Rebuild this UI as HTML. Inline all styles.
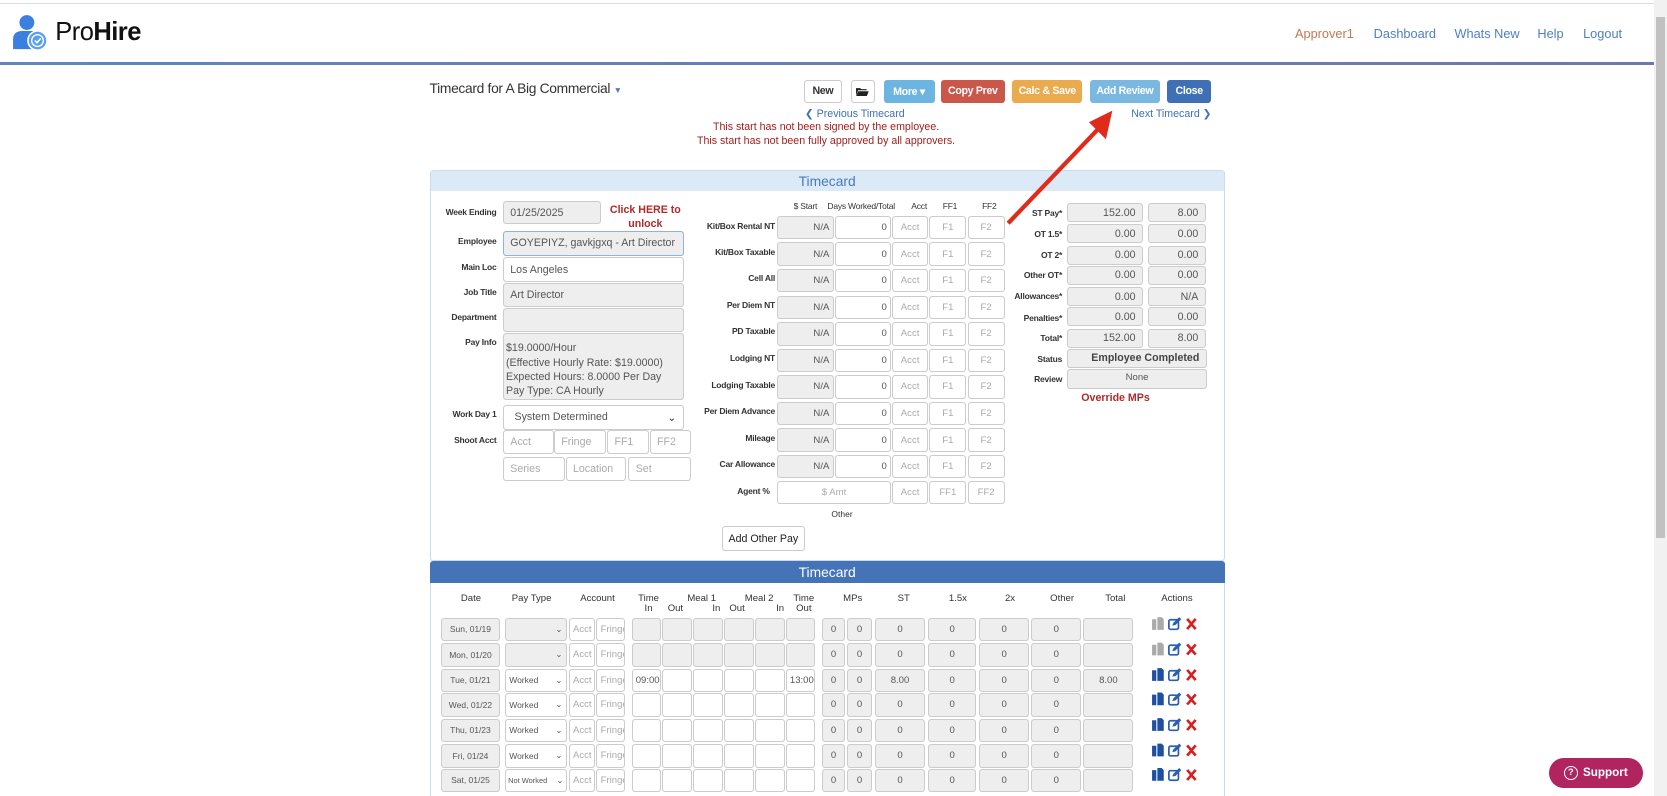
<!DOCTYPE html>
<html><head><meta charset="utf-8"><style>
html,body{margin:0;padding:0;background:#fff;overflow:hidden;width:1667px;height:796px}
#z{zoom:1.0632;position:relative;width:1568px;height:749px;font-family:"Liberation Sans",sans-serif;color:#333}
.a{position:absolute}
.f{position:absolute;box-sizing:border-box;border:1px solid #ccc;border-radius:3px;background:#eee;font-size:10px;color:#555;padding:0 6px;display:flex;align-items:center;white-space:nowrap}
.w{background:#fff}
.ph{color:#aaa}
.rt{justify-content:flex-end}
.ct{justify-content:center}
.l{position:absolute;font-size:8px;color:#333;text-align:right;font-weight:bold;letter-spacing:-.2px}
.btn{position:absolute;top:75px;height:22px;box-sizing:border-box;border-radius:3px;font-size:10px;font-weight:bold;color:#fff;display:flex;align-items:center;justify-content:center;letter-spacing:-.3px}
.r{position:absolute;left:0;width:1568px;height:22px}
.r .f{top:0;height:22px;font-size:9px;padding:0 3px}
.h{position:absolute;font-size:9px;color:#333;text-align:center;line-height:9px;white-space:nowrap}
</style></head><body><div id="z">
<div class="a" style="left:0;top:3px;width:1556px;height:1px;background:#ddd"></div>
<svg class="a" style="left:11px;top:13px" width="34" height="35" viewBox="0 0 34 35">
<circle cx="14" cy="8" r="7" fill="#3b7fe0"/>
<path d="M1 33 V24 Q1 16 10 16 H19 Q26 16 27 22 L27 33 Z" fill="#3b7fe0"/>
<circle cx="24" cy="25" r="9" fill="#5aa0f0" stroke="#fff" stroke-width="1.5"/>
<circle cx="24" cy="25" r="5.5" fill="none" stroke="#fff" stroke-width="1.3"/>
<path d="M21.5 25 L23.5 27 L27 23" fill="none" stroke="#fff" stroke-width="1.5"/>
</svg>
<div class="a" style="left:52px;top:17px;font-size:24px;color:#111;letter-spacing:-.5px">Pro<b>Hire</b></div>
<div class="a" style="top:24px;font-size:12px;left:1218px;color:#c07850">Approver1</div>
<div class="a" style="top:24px;font-size:12px;left:1292px;color:#4f7fc0">Dashboard</div>
<div class="a" style="top:24px;font-size:12px;left:1368px;color:#4f7fc0">Whats New</div>
<div class="a" style="top:24px;font-size:12px;left:1446px;color:#4f7fc0">Help</div>
<div class="a" style="top:24px;font-size:12px;left:1489px;color:#4f7fc0">Logout</div>
<div class="a" style="left:0;top:58px;width:1556px;height:3px;background:linear-gradient(90deg,#6384bd,#7077ad)"></div>
<div class="a" style="left:1556px;top:0;width:12px;height:749px;background:#f1f1f1"></div>
<div class="a" style="left:1558px;top:16px;width:8px;height:490px;background:#c1c1c1"></div>
<div class="a" style="left:404px;top:75px;font-size:13px;color:#333;letter-spacing:-.3px">Timecard for A Big Commercial <span style="font-size:8px;color:#4f7fc0">▼</span></div>
<div class="btn" style="left:756px;width:36px;background:#fff;border:1px solid #ccc;color:#333">New</div>
<div class="btn" style="left:800px;width:23px;background:#fff;border:1px solid #ccc;color:#222">
<svg width="12" height="9" viewBox="0 0 12 9"><path d="M0 1 H4 L5 2 H10 V3 H2 L0 8Z M2 4 H12 L10 9 H0Z" fill="#222"/></svg></div>
<div class="btn" style="left:831px;width:48px;background:#6bb5e0">More ▾</div>
<div class="btn" style="left:885px;width:60px;background:#c9584a">Copy Prev</div>
<div class="btn" style="left:952px;width:66px;background:#eaaa4e">Calc &amp; Save</div>
<div class="btn" style="left:1025px;width:66px;background:#7ab8e2">Add Review</div>
<div class="btn" style="left:1098px;width:41px;background:#3f6fb5">Close</div>
<div class="a" style="left:757px;top:101px;font-size:10px;color:#3f6fb5">❮ Previous Timecard</div>
<div class="a" style="left:1064px;top:101px;font-size:10px;color:#3f6fb5">Next Timecard ❯</div>
<div class="a" style="left:600px;width:354px;top:114px;font-size:10px;color:#a32020;text-align:center;line-height:13px">This start has not been signed by the employee.<br>This start has not been fully approved by all approvers.</div>
<div class="a" style="left:404px;top:160px;width:746px;height:366px;border:1px solid #c9dcee;border-radius:3px"></div>
<div class="a" style="left:405px;top:161px;width:746px;height:19px;background:#dce9f6;color:#4a7ab8;font-size:13px;text-align:center;line-height:20px">Timecard</div>
<div class="l" style="left:400px;width:67px;top:195px">Week Ending</div>
<div class="f" style="left:473px;top:189px;width:92px;height:22px">01/25/2025</div>
<div class="a" style="left:572px;width:70px;top:192px;font-size:10px;font-weight:bold;color:#b02a2a;text-align:center;line-height:13px">Click HERE to unlock</div>
<div class="l" style="left:400px;width:67px;top:222px">Employee</div>
<div class="f" style="left:473px;top:217px;width:170px;height:24px;border-color:#8fb3da">GOYEPIYZ, gavkjgxq - Art Director</div>
<div class="l" style="left:400px;width:67px;top:246px">Main Loc</div>
<div class="f w" style="left:473px;top:242px;width:170px;height:23px">Los Angeles</div>
<div class="l" style="left:400px;width:67px;top:270px">Job Title</div>
<div class="f" style="left:473px;top:266px;width:170px;height:23px">Art Director</div>
<div class="l" style="left:400px;width:67px;top:293px">Department</div>
<div class="f" style="left:473px;top:290px;width:170px;height:22px"></div>
<div class="l" style="left:400px;width:67px;top:317px">Pay Info</div>
<div class="f" style="left:473px;top:313px;width:170px;height:63px;align-items:flex-start;padding:7px 1px 0 2px;line-height:13.5px;font-size:10px;white-space:normal">$19.0000/Hour<br>(Effective Hourly Rate: $19.0000)<br>Expected Hours: 8.0000 Per Day<br>Pay Type: CA Hourly</div>
<div class="l" style="left:400px;width:67px;top:385px">Work Day 1</div>
<div class="f w" style="left:473px;top:381px;width:170px;height:23px;justify-content:space-between;padding:0 6px 0 10px">System Determined<span style="font-size:10px;color:#333">⌄</span></div>
<div class="l" style="left:400px;width:67px;top:409px">Shoot Acct</div>
<div class="f w ph" style="left:473px;top:404px;width:48px;height:23px">Acct</div>
<div class="f w ph" style="left:521px;top:404px;width:49px;height:23px">Fringe</div>
<div class="f w ph" style="left:571px;top:404px;width:39px;height:23px">FF1</div>
<div class="f w ph" style="left:611px;top:404px;width:39px;height:23px">FF2</div>
<div class="f w ph" style="left:473px;top:430px;width:58px;height:22px">Series</div>
<div class="f w ph" style="left:532px;top:430px;width:57px;height:22px">Location</div>
<div class="f w ph" style="left:591px;top:430px;width:59px;height:22px">Set</div>
<div class="l" style="left:740px;width:35px;top:189px;text-align:center;font-weight:normal">$ Start</div>
<div class="l" style="left:776px;width:68px;top:189px;text-align:center;font-weight:normal">Days Worked/Total</div>
<div class="l" style="left:852px;width:25px;top:189px;text-align:center;font-weight:normal">Acct</div>
<div class="l" style="left:881px;width:25px;top:189px;text-align:center;font-weight:normal">FF1</div>
<div class="l" style="left:918px;width:25px;top:189px;text-align:center;font-weight:normal">FF2</div>

<div class="l" style="left:640px;width:89px;top:208px">Kit/Box Rental NT</div>
<div class="r" style="top:203px"><div class="f rt" style="left:731px;width:53px">N/A</div><div class="f w rt" style="left:785px;width:53px">0</div><div class="f w ph ct" style="left:839px;width:34px">Acct</div><div class="f w ph ct" style="left:874px;width:35px">F1</div><div class="f w ph ct" style="left:910px;width:35px">F2</div></div>
<div class="l" style="left:640px;width:89px;top:232px">Kit/Box Taxable</div>
<div class="r" style="top:228px"><div class="f rt" style="left:731px;width:53px">N/A</div><div class="f w rt" style="left:785px;width:53px">0</div><div class="f w ph ct" style="left:839px;width:34px">Acct</div><div class="f w ph ct" style="left:874px;width:35px">F1</div><div class="f w ph ct" style="left:910px;width:35px">F2</div></div>
<div class="l" style="left:640px;width:89px;top:257px">Cell All</div>
<div class="r" style="top:253px"><div class="f rt" style="left:731px;width:53px">N/A</div><div class="f w rt" style="left:785px;width:53px">0</div><div class="f w ph ct" style="left:839px;width:34px">Acct</div><div class="f w ph ct" style="left:874px;width:35px">F1</div><div class="f w ph ct" style="left:910px;width:35px">F2</div></div>
<div class="l" style="left:640px;width:89px;top:282px">Per Diem NT</div>
<div class="r" style="top:278px"><div class="f rt" style="left:731px;width:53px">N/A</div><div class="f w rt" style="left:785px;width:53px">0</div><div class="f w ph ct" style="left:839px;width:34px">Acct</div><div class="f w ph ct" style="left:874px;width:35px">F1</div><div class="f w ph ct" style="left:910px;width:35px">F2</div></div>
<div class="l" style="left:640px;width:89px;top:307px">PD Taxable</div>
<div class="r" style="top:303px"><div class="f rt" style="left:731px;width:53px">N/A</div><div class="f w rt" style="left:785px;width:53px">0</div><div class="f w ph ct" style="left:839px;width:34px">Acct</div><div class="f w ph ct" style="left:874px;width:35px">F1</div><div class="f w ph ct" style="left:910px;width:35px">F2</div></div>
<div class="l" style="left:640px;width:89px;top:332px">Lodging NT</div>
<div class="r" style="top:328px"><div class="f rt" style="left:731px;width:53px">N/A</div><div class="f w rt" style="left:785px;width:53px">0</div><div class="f w ph ct" style="left:839px;width:34px">Acct</div><div class="f w ph ct" style="left:874px;width:35px">F1</div><div class="f w ph ct" style="left:910px;width:35px">F2</div></div>
<div class="l" style="left:640px;width:89px;top:357px">Lodging Taxable</div>
<div class="r" style="top:353px"><div class="f rt" style="left:731px;width:53px">N/A</div><div class="f w rt" style="left:785px;width:53px">0</div><div class="f w ph ct" style="left:839px;width:34px">Acct</div><div class="f w ph ct" style="left:874px;width:35px">F1</div><div class="f w ph ct" style="left:910px;width:35px">F2</div></div>
<div class="l" style="left:640px;width:89px;top:382px">Per Diem Advance</div>
<div class="r" style="top:378px"><div class="f rt" style="left:731px;width:53px">N/A</div><div class="f w rt" style="left:785px;width:53px">0</div><div class="f w ph ct" style="left:839px;width:34px">Acct</div><div class="f w ph ct" style="left:874px;width:35px">F1</div><div class="f w ph ct" style="left:910px;width:35px">F2</div></div>
<div class="l" style="left:640px;width:89px;top:407px">Mileage</div>
<div class="r" style="top:403px"><div class="f rt" style="left:731px;width:53px">N/A</div><div class="f w rt" style="left:785px;width:53px">0</div><div class="f w ph ct" style="left:839px;width:34px">Acct</div><div class="f w ph ct" style="left:874px;width:35px">F1</div><div class="f w ph ct" style="left:910px;width:35px">F2</div></div>
<div class="l" style="left:640px;width:89px;top:432px">Car Allowance</div>
<div class="r" style="top:428px"><div class="f rt" style="left:731px;width:53px">N/A</div><div class="f w rt" style="left:785px;width:53px">0</div><div class="f w ph ct" style="left:839px;width:34px">Acct</div><div class="f w ph ct" style="left:874px;width:35px">F1</div><div class="f w ph ct" style="left:910px;width:35px">F2</div></div>
<div class="l" style="left:640px;width:84px;top:457px">Agent %</div>
<div class="r" style="top:452px"><div class="f w ph ct" style="left:731px;width:107px">$ Amt</div><div class="f w ph ct" style="left:839px;width:34px">Acct</div><div class="f w ph ct" style="left:874px;width:35px">FF1</div><div class="f w ph ct" style="left:910px;width:35px">FF2</div></div>
<div class="a" style="left:782px;top:479px;font-size:8px">Other</div>
<div class="f w ct" style="left:679px;top:495px;width:78px;height:23px;color:#222;font-size:10px;padding:0">Add Other Pay</div>

<div class="l" style="left:930px;width:69px;top:196px">ST Pay*</div>
<div class="f rt" style="left:1004px;top:191px;width:71px;height:18px">152.00</div><div class="f rt" style="left:1080px;top:191px;width:54px;height:18px">8.00</div>
<div class="l" style="left:930px;width:69px;top:215px">OT 1.5*</div>
<div class="f rt" style="left:1004px;top:211px;width:71px;height:18px">0.00</div><div class="f rt" style="left:1080px;top:211px;width:54px;height:18px">0.00</div>
<div class="l" style="left:930px;width:69px;top:235px">OT 2*</div>
<div class="f rt" style="left:1004px;top:231px;width:71px;height:18px">0.00</div><div class="f rt" style="left:1080px;top:231px;width:54px;height:18px">0.00</div>
<div class="l" style="left:930px;width:69px;top:254px">Other OT*</div>
<div class="f rt" style="left:1004px;top:250px;width:71px;height:18px">0.00</div><div class="f rt" style="left:1080px;top:250px;width:54px;height:18px">0.00</div>
<div class="l" style="left:930px;width:69px;top:274px">Allowances*</div>
<div class="f rt" style="left:1004px;top:270px;width:71px;height:18px">0.00</div><div class="f rt" style="left:1080px;top:270px;width:54px;height:18px">N/A</div>
<div class="l" style="left:930px;width:69px;top:294px">Penalties*</div>
<div class="f rt" style="left:1004px;top:289px;width:71px;height:18px">0.00</div><div class="f rt" style="left:1080px;top:289px;width:54px;height:18px">0.00</div>
<div class="l" style="left:930px;width:69px;top:313px">Total*</div>
<div class="f rt" style="left:1004px;top:309px;width:71px;height:18px">152.00</div><div class="f rt" style="left:1080px;top:309px;width:54px;height:18px">8.00</div>
<div class="l" style="left:930px;width:69px;top:333px">Status</div>
<div class="f rt" style="left:1004px;top:328px;width:131px;height:18px;font-weight:bold;color:#444">Employee Completed</div>
<div class="l" style="left:930px;width:69px;top:352px">Review</div>
<div class="f ct" style="left:1004px;top:347px;width:131px;height:19px;align-items:flex-start;font-size:9px;padding-top:2px">None</div>
<div class="a" style="left:1017px;top:369px;font-size:10px;font-weight:bold;color:#b02a2a">Override MPs</div>
<svg class="a" style="left:930px;top:95px" width="130" height="125"><line x1="18" y1="115" x2="104" y2="25" stroke="#e02a1a" stroke-width="4"/><polygon points="116,9 94,20 110,36" fill="#e02a1a"/></svg>

<div class="a" style="left:404px;top:528px;width:746px;height:230px;border:1px solid #c9dcee;border-radius:3px"></div>
<div class="a" style="left:404px;top:528px;width:748px;height:20px;background:#4473b8;color:#fff;font-size:13px;text-align:center;line-height:21px;border-radius:3px 3px 0 0">Timecard</div>
<div class="h" style="left:423px;width:40px;top:559px">Date</div>
<div class="h" style="left:475px;width:50px;top:559px">Pay Type</div>
<div class="h" style="left:537px;width:50px;top:559px">Account</div>
<div class="h" style="left:598px;width:24px;top:559px">Time<br>In</div>
<div class="h" style="left:640px;width:40px;top:559px">Meal 1</div>
<div class="h" style="left:628px;top:568px">Out</div>
<div class="h" style="left:670px;top:568px">In</div>
<div class="h" style="left:694px;width:40px;top:559px">Meal 2</div>
<div class="h" style="left:686px;top:568px">Out</div>
<div class="h" style="left:730px;top:568px">In</div>
<div class="h" style="left:744px;width:24px;top:559px">Time<br>Out</div>
<div class="h" style="left:786px;width:32px;top:559px">MPs</div>
<div class="h" style="left:835px;width:30px;top:559px">ST</div>
<div class="h" style="left:886px;width:30px;top:559px">1.5x</div>
<div class="h" style="left:935px;width:30px;top:559px">2x</div>
<div class="h" style="left:981px;width:36px;top:559px">Other</div>
<div class="h" style="left:1033px;width:32px;top:559px">Total</div>
<div class="h" style="left:1087px;width:40px;top:559px">Actions</div>

<div class="r" style="top:581px"><div class="f ct" style="left:415px;width:55px;font-size:8px">Sun, 01/19</div><div class="f" style="left:475px;width:58px;justify-content:flex-end;font-size:8px">⌄</div><div class="f w ph" style="left:535px;width:25px">Acct</div><div class="f w ph" style="left:561px;width:27px;overflow:hidden">Fringe</div><div class="f" style="left:594px;width:28px"></div><div class="f" style="left:623px;width:28px"></div><div class="f" style="left:652px;width:28px"></div><div class="f" style="left:681px;width:28px"></div><div class="f" style="left:710px;width:28px"></div><div class="f" style="left:739px;width:28px"></div><div class="f ct" style="left:773px;width:22px">0</div><div class="f ct" style="left:797px;width:23px">0</div><div class="f ct" style="left:823px;width:47px">0</div><div class="f ct" style="left:873px;width:45px">0</div><div class="f ct" style="left:921px;width:47px">0</div><div class="f ct" style="left:970px;width:47px">0</div><div class="f ct" style="left:1019px;width:47px"></div></div>
<div class="r" style="top:605px"><div class="f ct" style="left:415px;width:55px;font-size:8px">Mon, 01/20</div><div class="f" style="left:475px;width:58px;justify-content:flex-end;font-size:8px">⌄</div><div class="f w ph" style="left:535px;width:25px">Acct</div><div class="f w ph" style="left:561px;width:27px;overflow:hidden">Fringe</div><div class="f" style="left:594px;width:28px"></div><div class="f" style="left:623px;width:28px"></div><div class="f" style="left:652px;width:28px"></div><div class="f" style="left:681px;width:28px"></div><div class="f" style="left:710px;width:28px"></div><div class="f" style="left:739px;width:28px"></div><div class="f ct" style="left:773px;width:22px">0</div><div class="f ct" style="left:797px;width:23px">0</div><div class="f ct" style="left:823px;width:47px">0</div><div class="f ct" style="left:873px;width:45px">0</div><div class="f ct" style="left:921px;width:47px">0</div><div class="f ct" style="left:970px;width:47px">0</div><div class="f ct" style="left:1019px;width:47px"></div></div>
<div class="r" style="top:629px"><div class="f ct" style="left:415px;width:55px;font-size:8px">Tue, 01/21</div><div class="f w" style="left:475px;width:58px;justify-content:space-between;font-size:8px">Worked<span>⌄</span></div><div class="f w ph" style="left:535px;width:25px">Acct</div><div class="f w ph" style="left:561px;width:27px;overflow:hidden">Fringe</div><div class="f w" style="left:594px;width:28px">09:00</div><div class="f w" style="left:623px;width:28px"></div><div class="f w" style="left:652px;width:28px"></div><div class="f w" style="left:681px;width:28px"></div><div class="f w" style="left:710px;width:28px"></div><div class="f w" style="left:739px;width:28px">13:00</div><div class="f ct" style="left:773px;width:22px">0</div><div class="f ct" style="left:797px;width:23px">0</div><div class="f ct" style="left:823px;width:47px">8.00</div><div class="f ct" style="left:873px;width:45px">0</div><div class="f ct" style="left:921px;width:47px">0</div><div class="f ct" style="left:970px;width:47px">0</div><div class="f ct" style="left:1019px;width:47px">8.00</div></div>
<div class="r" style="top:652px"><div class="f ct" style="left:415px;width:55px;font-size:8px">Wed, 01/22</div><div class="f w" style="left:475px;width:58px;justify-content:space-between;font-size:8px">Worked<span>⌄</span></div><div class="f w ph" style="left:535px;width:25px">Acct</div><div class="f w ph" style="left:561px;width:27px;overflow:hidden">Fringe</div><div class="f w" style="left:594px;width:28px"></div><div class="f w" style="left:623px;width:28px"></div><div class="f w" style="left:652px;width:28px"></div><div class="f w" style="left:681px;width:28px"></div><div class="f w" style="left:710px;width:28px"></div><div class="f w" style="left:739px;width:28px"></div><div class="f ct" style="left:773px;width:22px">0</div><div class="f ct" style="left:797px;width:23px">0</div><div class="f ct" style="left:823px;width:47px">0</div><div class="f ct" style="left:873px;width:45px">0</div><div class="f ct" style="left:921px;width:47px">0</div><div class="f ct" style="left:970px;width:47px">0</div><div class="f ct" style="left:1019px;width:47px"></div></div>
<div class="r" style="top:676px"><div class="f ct" style="left:415px;width:55px;font-size:8px">Thu, 01/23</div><div class="f w" style="left:475px;width:58px;justify-content:space-between;font-size:8px">Worked<span>⌄</span></div><div class="f w ph" style="left:535px;width:25px">Acct</div><div class="f w ph" style="left:561px;width:27px;overflow:hidden">Fringe</div><div class="f w" style="left:594px;width:28px"></div><div class="f w" style="left:623px;width:28px"></div><div class="f w" style="left:652px;width:28px"></div><div class="f w" style="left:681px;width:28px"></div><div class="f w" style="left:710px;width:28px"></div><div class="f w" style="left:739px;width:28px"></div><div class="f ct" style="left:773px;width:22px">0</div><div class="f ct" style="left:797px;width:23px">0</div><div class="f ct" style="left:823px;width:47px">0</div><div class="f ct" style="left:873px;width:45px">0</div><div class="f ct" style="left:921px;width:47px">0</div><div class="f ct" style="left:970px;width:47px">0</div><div class="f ct" style="left:1019px;width:47px"></div></div>
<div class="r" style="top:700px"><div class="f ct" style="left:415px;width:55px;font-size:8px">Fri, 01/24</div><div class="f w" style="left:475px;width:58px;justify-content:space-between;font-size:8px">Worked<span>⌄</span></div><div class="f w ph" style="left:535px;width:25px">Acct</div><div class="f w ph" style="left:561px;width:27px;overflow:hidden">Fringe</div><div class="f w" style="left:594px;width:28px"></div><div class="f w" style="left:623px;width:28px"></div><div class="f w" style="left:652px;width:28px"></div><div class="f w" style="left:681px;width:28px"></div><div class="f w" style="left:710px;width:28px"></div><div class="f w" style="left:739px;width:28px"></div><div class="f ct" style="left:773px;width:22px">0</div><div class="f ct" style="left:797px;width:23px">0</div><div class="f ct" style="left:823px;width:47px">0</div><div class="f ct" style="left:873px;width:45px">0</div><div class="f ct" style="left:921px;width:47px">0</div><div class="f ct" style="left:970px;width:47px">0</div><div class="f ct" style="left:1019px;width:47px"></div></div>
<div class="r" style="top:723px"><div class="f ct" style="left:415px;width:55px;font-size:8px">Sat, 01/25</div><div class="f w" style="left:475px;width:58px;justify-content:space-between;font-size:7px;padding:0 2px">Not Worked<span style="font-size:8px">⌄</span></div><div class="f w ph" style="left:535px;width:25px">Acct</div><div class="f w ph" style="left:561px;width:27px;overflow:hidden">Fringe</div><div class="f w" style="left:594px;width:28px"></div><div class="f w" style="left:623px;width:28px"></div><div class="f w" style="left:652px;width:28px"></div><div class="f w" style="left:681px;width:28px"></div><div class="f w" style="left:710px;width:28px"></div><div class="f w" style="left:739px;width:28px"></div><div class="f ct" style="left:773px;width:22px">0</div><div class="f ct" style="left:797px;width:23px">0</div><div class="f ct" style="left:823px;width:47px">0</div><div class="f ct" style="left:873px;width:45px">0</div><div class="f ct" style="left:921px;width:47px">0</div><div class="f ct" style="left:970px;width:47px">0</div><div class="f ct" style="left:1019px;width:47px"></div></div>

<svg class="a" style="left:1083px;top:579px" width="50" height="160" viewBox="0 0 50 160">
<defs>
<g id="cp"><path d="M0 2 H4 V12 H0Z M5 0 H9 L11 2 V12 H5Z"/></g>
<g id="ed"><rect x="0.8" y="2.5" width="9" height="9" rx="1.5" fill="none" stroke-width="1.6"/><path d="M4 8 L5 5.5 L10.5 0 L12.5 2 L7 7.5Z" stroke="none"/></g>
<g id="x"><path d="M1 1.5 L3 0 L6 3.5 L9 0 L11 1.5 L7.5 5.5 L11 9.5 L9 11 L6 7.5 L3 11 L1 9.5 L4.5 5.5Z"/></g>
</defs>
<use href="#cp" x="1" y="1" fill="#aaa"/><use href="#ed" x="16" y="1" fill="#2a5fb0" stroke="#2a5fb0"/><use href="#x" x="32" y="2" fill="#d42020"/>
<use href="#cp" x="1" y="25" fill="#aaa"/><use href="#ed" x="16" y="25" fill="#2a5fb0" stroke="#2a5fb0"/><use href="#x" x="32" y="26" fill="#d42020"/>
<use href="#cp" x="1" y="49" fill="#1f4fa0"/><use href="#ed" x="16" y="49" fill="#2a5fb0" stroke="#2a5fb0"/><use href="#x" x="32" y="50" fill="#d42020"/>
<use href="#cp" x="1" y="72" fill="#1f4fa0"/><use href="#ed" x="16" y="72" fill="#2a5fb0" stroke="#2a5fb0"/><use href="#x" x="32" y="73" fill="#d42020"/>
<use href="#cp" x="1" y="96" fill="#1f4fa0"/><use href="#ed" x="16" y="96" fill="#2a5fb0" stroke="#2a5fb0"/><use href="#x" x="32" y="97" fill="#d42020"/>
<use href="#cp" x="1" y="120" fill="#1f4fa0"/><use href="#ed" x="16" y="120" fill="#2a5fb0" stroke="#2a5fb0"/><use href="#x" x="32" y="121" fill="#d42020"/>
<use href="#cp" x="1" y="143" fill="#1f4fa0"/><use href="#ed" x="16" y="143" fill="#2a5fb0" stroke="#2a5fb0"/><use href="#x" x="32" y="144" fill="#d42020"/>
</svg>
<div class="a" style="left:1457px;top:713px;width:88px;height:28px;border-radius:14px;background:#b02460;color:#fff;font-size:11px;font-weight:bold;display:flex;align-items:center;justify-content:center"><span style="display:inline-block;width:11px;height:11px;border:1.5px solid #fff;border-radius:50%;font-size:9px;line-height:11px;text-align:center;margin-right:5px">?</span>Support</div>
</div></body></html>
